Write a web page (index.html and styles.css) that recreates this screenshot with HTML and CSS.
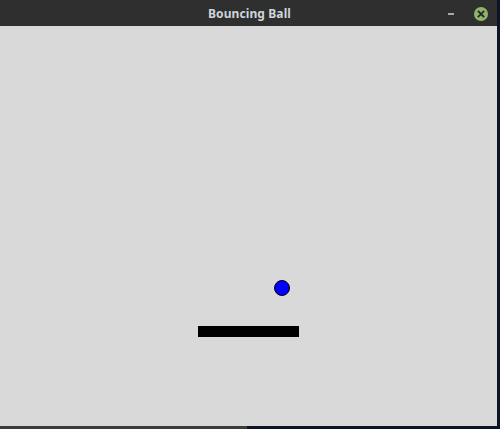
FILE: index.html
```html
<!DOCTYPE html>
<html>
<head>
<meta charset="utf-8">
<title>Bouncing Ball</title>
<link rel="stylesheet" href="styles.css">
</head>
<body>
<div class="screen">
  <div class="window">
    <div class="titlebar">
      <div class="title">Bouncing Ball</div>
      <div class="controls">
        <span class="minimize"></span>
        <span class="close">
          <svg width="14" height="14" viewBox="0 0 14 14">
            <circle cx="7" cy="7" r="7" fill="#8fb56c"/>
            <path d="M4.5 4.5 L9.5 9.5 M9.5 4.5 L4.5 9.5" stroke="#2a2a2a" stroke-width="1.8" stroke-linecap="square"/>
          </svg>
        </span>
      </div>
    </div>
    <div class="canvas">
      <div class="ball"></div>
      <div class="paddle"></div>
    </div>
  </div>
  <div class="taskbar">
    <div class="panel"></div>
  </div>
</div>
</body>
</html>
```

FILE: styles.css
```css
html, body {
  margin: 0;
  padding: 0;
}
body {
  width: 500px;
  height: 429px;
  overflow: hidden;
  background: #0b1526;
  font-family: "Noto Sans", "DejaVu Sans", sans-serif;
}
.screen {
  width: 500px;
  height: 429px;
  display: flex;
  flex-direction: column;
}
.window {
  width: 497px;
  height: 426px;
  display: flex;
  flex-direction: column;
}
.titlebar {
  height: 26px;
  background: #2f2f2f;
  position: relative;
  display: flex;
  align-items: center;
  justify-content: center;
}
.title {
  color: #cdd5dc;
  font-weight: bold;
  font-size: 12px;
  padding-left: 2px;
  letter-spacing: 0.1px;
}
.controls {
  position: absolute;
  right: 9px;
  top: 7px;
  display: flex;
  align-items: center;
  gap: 20px;
}
.minimize {
  width: 6px;
  height: 2px;
  background: #a9a9a9;
  margin-top: 0px;
}
.close {
  width: 14px;
  height: 14px;
  display: block;
}
.close svg {
  display: block;
}
.canvas {
  flex: 1;
  background: #d9d9d9;
  position: relative;
}
.ball {
  position: absolute;
  left: 274px;
  top: 254px;
  width: 14px;
  height: 14px;
  border: 1px solid #000;
  border-radius: 50%;
  background: #0000ff;
}
.paddle {
  position: absolute;
  left: 198px;
  top: 300px;
  width: 101px;
  height: 11px;
  background: #000;
}
.taskbar {
  height: 3px;
  display: flex;
}
.panel {
  width: 247px;
  background: #3c3c3c;
}
```
